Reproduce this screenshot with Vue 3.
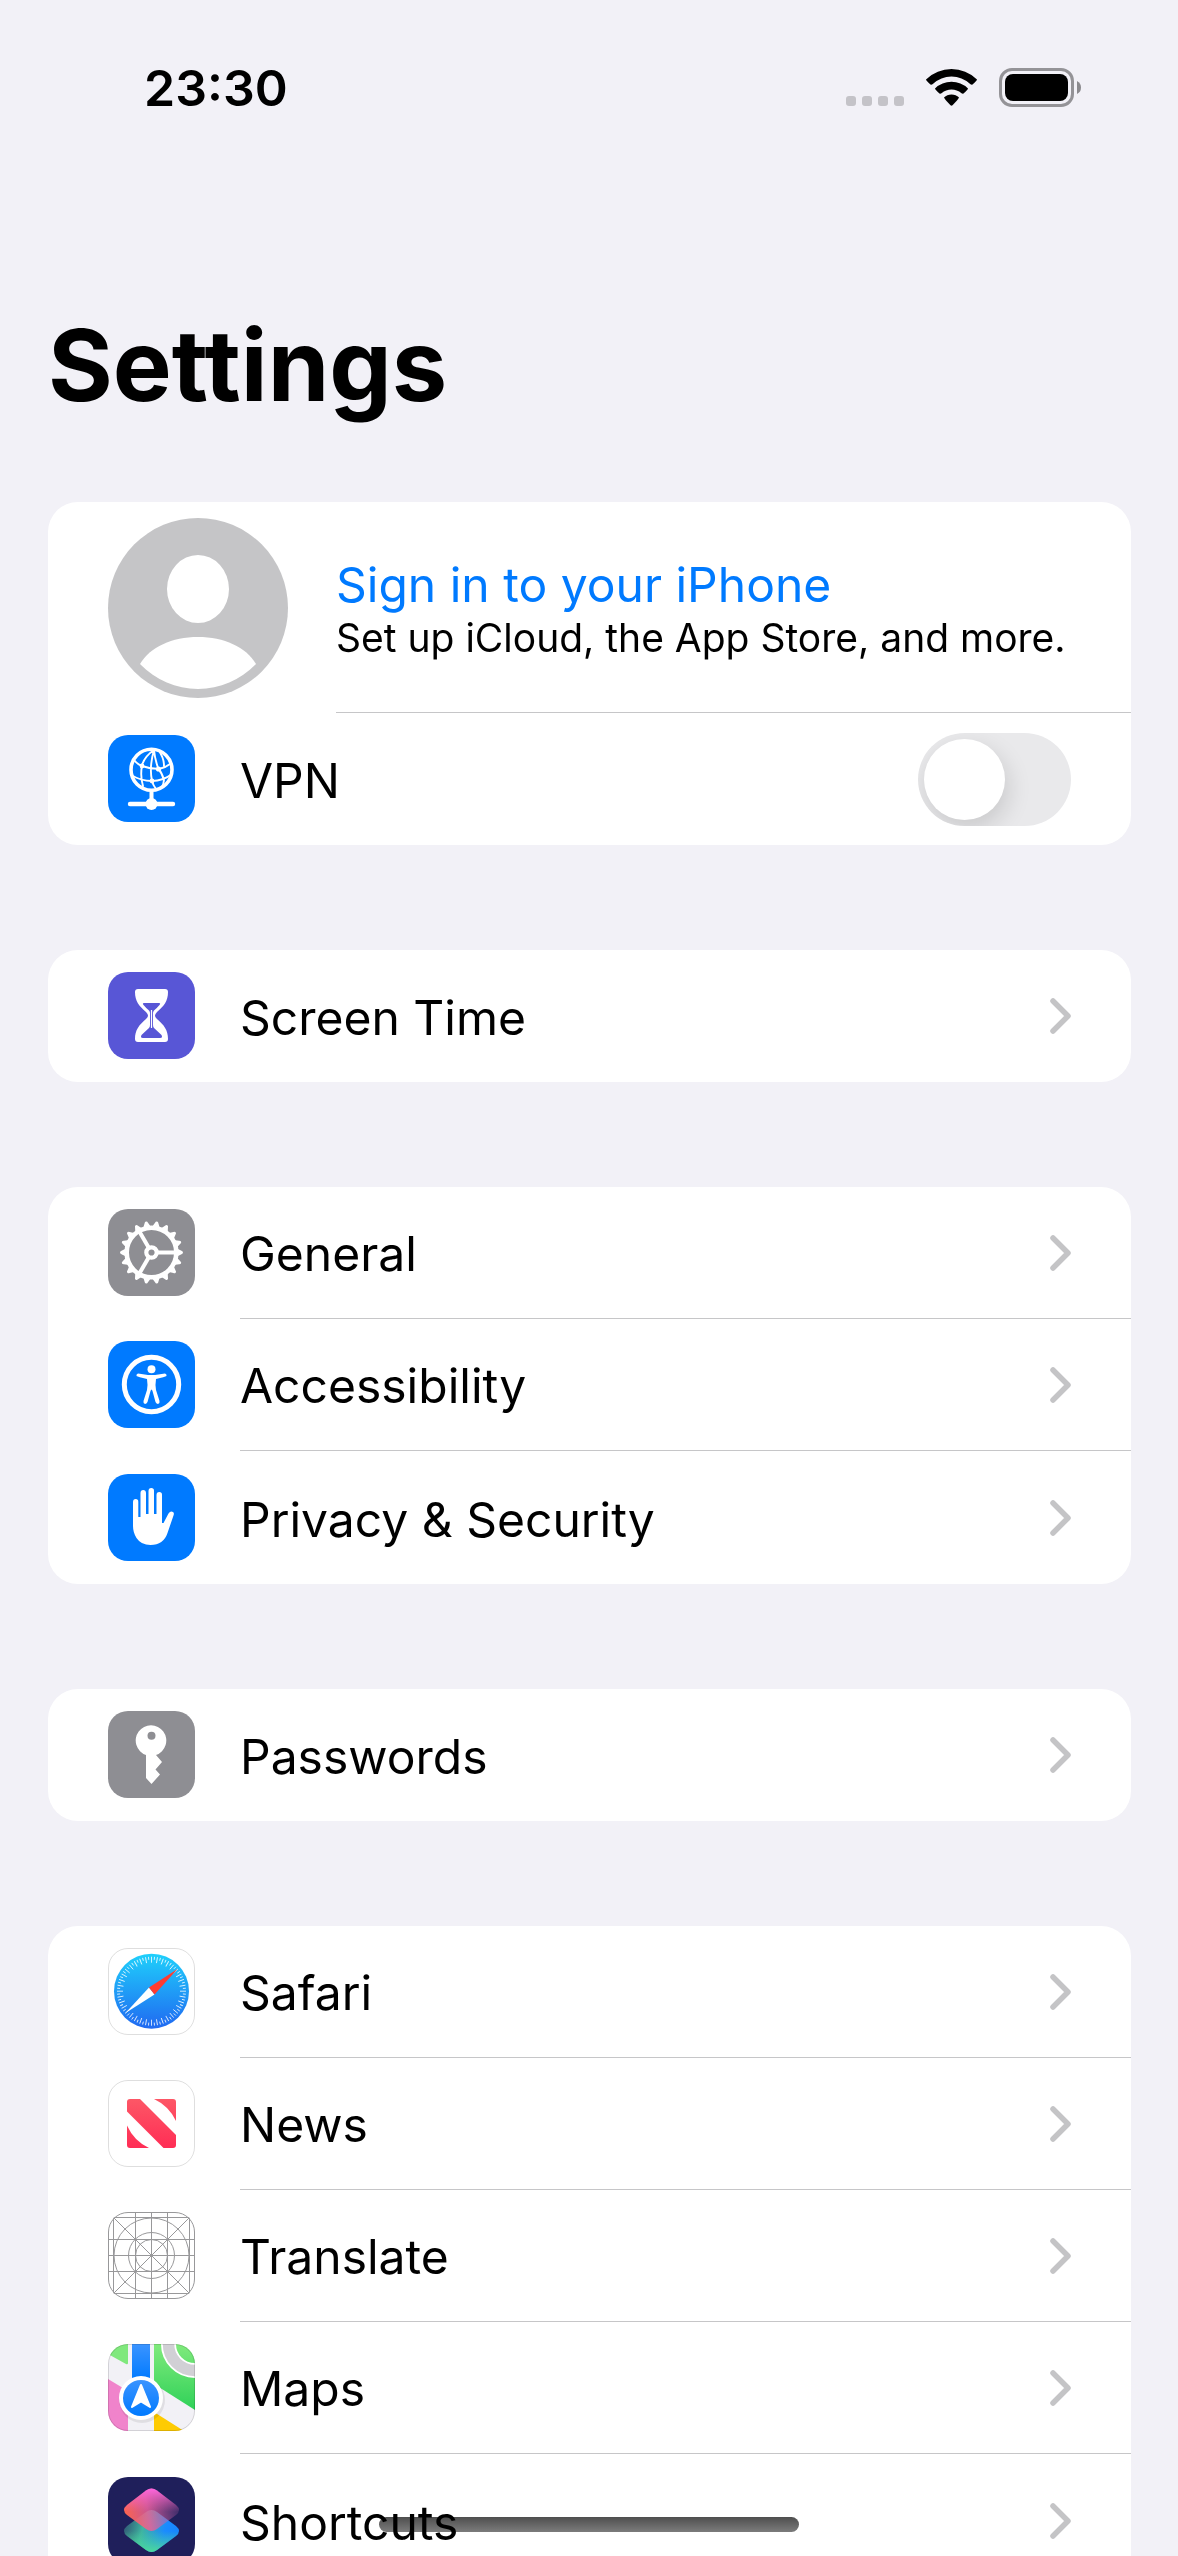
<script setup>
import { ref } from 'vue'

const vpnOn = ref(false)

const groups = [
  [{ id: 'screen-time', label: 'Screen Time', tint: '#5856d6' }],
  [
    { id: 'general', label: 'General', tint: '#8e8e93' },
    { id: 'accessibility', label: 'Accessibility', tint: '#007aff' },
    { id: 'privacy', label: 'Privacy & Security', tint: '#007aff' },
  ],
  [{ id: 'passwords', label: 'Passwords', tint: '#8e8e93' }],
  [
    { id: 'safari', label: 'Safari', tint: '#ffffff' },
    { id: 'news', label: 'News', tint: '#ffffff' },
    { id: 'translate', label: 'Translate', tint: '#ffffff' },
    { id: 'maps', label: 'Maps', tint: '#f2f1f6' },
    { id: 'shortcuts', label: 'Shortcuts', tint: '#1f1f5b' },
  ],
]

const gearTeeth = Array.from({ length: 18 }, (_, i) => i * 20)
const compassTicks = Array.from({ length: 72 }, (_, i) => ({ angle: i * 5, long: i % 2 === 0 }))
const gridLines = [5, 27, 43, 59, 81]
</script>

<template>
  <div class="screen">
    <header class="status">
      <time class="clock">23:30</time>
      <div class="indicators">
        <svg class="cellular" viewBox="0 0 58 10" aria-hidden="true">
          <rect v-for="n in 4" :key="n" :x="(n - 1) * 16" width="10" height="10" rx="3" fill="#c4c3c8" />
        </svg>
        <svg class="wifi" viewBox="0 0 51 37" aria-hidden="true">
          <path d="M0 10.500Q11 0 25.500 0T51 10.500Q51 11.500 46.500 15.500Q45.500 16 44.500 15.200Q36 7.500 25.500 7.500T6.500 15.200Q5.500 16 4.500 15.500Q0 11.500 0 10.500Z" />
          <path d="M9 19.500Q16 12.800 25.500 12.800T42 19.500Q42 20.500 37.500 24.500Q36.500 25 35.500 24.200Q31 20.500 25.500 20.500T15.500 24.200Q14.500 25 13.500 24.500Q9 20.500 9 19.500Z" />
          <path d="M18 28.500Q21 25.500 25.500 25.500T33 28.500Q33 29.500 26.500 36.300Q25.500 37 24.500 36.300Q18 29.500 18 28.500Z" />
        </svg>
        <svg class="battery" viewBox="0 0 83 39" aria-hidden="true">
          <rect x="1.500" y="1.500" width="72" height="36" rx="11.500" fill="none" stroke="#949397" stroke-width="3" />
          <rect x="6" y="6" width="63" height="27" rx="8" />
          <path d="M78 13Q82 15 82 19.500T78 26Z" fill="#8b8a8e" />
        </svg>
      </div>
    </header>

    <main class="content">
      <h1 class="title">Settings</h1>

      <section class="card">
        <a class="profile" href="#sign-in">
          <svg class="avatar" viewBox="0 0 180 180" aria-hidden="true">
            <circle cx="90" cy="90" r="90" fill="#c5c5c7" />
            <ellipse cx="90" cy="71" rx="31" ry="34" fill="#fff" />
            <path d="M32 146C42 129 64 119 90 119S138 129 148 146C132 162 112 171 90 171S48 162 32 146Z" fill="#fff" />
          </svg>
          <span class="profile-text">
            <span class="profile-title">Sign in to your iPhone</span>
            <span class="profile-sub">Set up iCloud, the App Store, and more.</span>
          </span>
        </a>
        <div class="vpn">
          <svg class="icon" viewBox="0 0 87 87" aria-hidden="true">
            <rect width="87" height="87" rx="20" fill="#007aff" />
            <g fill="none" stroke="#fff" stroke-linecap="round">
              <circle cx="43.500" cy="34.700" r="20.500" stroke-width="3.600" />
              <path stroke-width="1.900" d="M46 15Q37 21 34 30Q32 42 35 51M46 15Q41 32 44 46Q45 50 48 54M46 15Q47 25 50.500 34Q54 38 56 45Q56 49 53 53M51 16Q56 23 56 31M26 25Q29 29 34 31Q42 34 51 34Q57 33 62 29M23 40Q33 46 44 46Q55 46 64 39" />
              <path stroke-width="4" d="M43.500 57V67" />
              <path stroke-width="4.400" d="M22 69H65" />
            </g>
            <circle cx="34" cy="31" r="2.400" fill="#fff" />
            <circle cx="50.500" cy="34" r="2.600" fill="#fff" />
            <circle cx="44" cy="46" r="2.400" fill="#fff" />
            <circle cx="43.500" cy="69" r="6" fill="#fff" />
          </svg>
          <label class="vpn-label" for="vpn-switch">VPN</label>
          <input id="vpn-switch" v-model="vpnOn" class="switch" type="checkbox" role="switch" />
        </div>
      </section>

      <nav v-for="(group, g) in groups" :key="g" class="card">
        <a v-for="item in group" :key="item.id" class="row" :href="'#' + item.id">
          <svg class="icon" viewBox="0 0 87 87" aria-hidden="true">
            <defs>
              <clipPath :id="'tile-' + item.id"><rect width="87" height="87" rx="20" /></clipPath>
            </defs>
            <rect width="87" height="87" rx="20" :fill="item.tint" />

            <template v-if="item.id === 'screen-time'">
              <path fill="#fff" d="M30 17H57Q60 17 60 20C60 29 56 34 49 40Q47 42 47 43.500T49 47C56 53 60 58 60 67Q60 70 57 70H30Q27 70 27 67C27 58 31 53 38 47Q40 45 40 43.500T38 40C31 34 27 29 27 20Q27 17 30 17Z" />
              <path fill="#5856d6" d="M36 31H51Q53 31 51.500 33Q49 36 46 38.500Q45 39.500 45 41V53Q45 55 46 56L53.500 63Q55 66 52 66H35Q32 66 33.500 63L41 56Q42 55 42 53V41Q42 39.500 41 38.500Q38 36 35.500 33Q34 31 36 31Z" />
              <path stroke="#fff" stroke-width="1.200" d="M43.500 38V56" />
            </template>

            <g v-else-if="item.id === 'general'" transform="translate(43.500 43.500)">
              <path v-for="a in gearTeeth" :key="a" :transform="`rotate(${a})`" fill="#fff" d="M25-4.200L30-1.700Q31.500-1.300 31.500 0T30 1.700L25 4.200Z" />
              <circle r="24.800" fill="none" stroke="#fff" stroke-width="4.600" />
              <path v-for="a in [0, 120, 240]" :key="'s' + a" :transform="`rotate(${a})`" stroke="#fff" stroke-width="4" d="M6 0H24" />
              <circle r="5.200" fill="#8e8e93" stroke="#fff" stroke-width="4.200" />
            </g>

            <template v-else-if="item.id === 'accessibility'">
              <circle cx="43.500" cy="43.500" r="27.200" fill="none" stroke="#fff" stroke-width="5" />
              <circle cx="43.500" cy="28.300" r="4" fill="#fff" />
              <path fill="#fff" d="M30 32.500L40 34H47L57 32.500Q59 33 58.500 35Q57 36 48 38Q47 44 48 49L51.500 60Q52 62.500 50 63Q48.500 63 47.500 61L44.500 50Q43.500 47 42.500 50L39.500 61Q38.500 63 37 63Q35 62.500 35.500 60L39 49Q40 44 39 38Q30 36 28.500 35Q28 33 30 32.500Z" />
            </template>

            <path
              v-else-if="item.id === 'privacy'"
              fill="#fff"
              d="M25 28Q25 25 27.700 25T30.300 28V43H32.500V19Q32.500 16 35.200 16T38 19V40H40.500V17Q40.500 14 43.300 14T46 17V40H48.500V21Q48.500 18 51.300 18T54 21V49H55.500L60.500 39.500Q62.500 36.500 65 38Q66.500 39 65.500 41.500L59.500 59Q55.500 71 42.500 71Q33 71 28.500 64Q25 58.500 25 52Z"
            />

            <template v-else-if="item.id === 'passwords'">
              <path fill="#fff" d="M38 44A15.300 15.300 0 1 1 48 44L54 51L47.500 58.500L52 63.500L43.500 73L38 67Z" />
              <circle cx="43.500" cy="24.700" r="4" fill="#8e8e93" />
            </template>

            <template v-else-if="item.id === 'safari'">
              <linearGradient id="safari-sky" x1="0" y1="0" x2="0" y2="1">
                <stop offset="0" stop-color="#1fd0fb" />
                <stop offset="1" stop-color="#2069f1" />
              </linearGradient>
              <circle cx="43.500" cy="43.200" r="37.500" fill="url(#safari-sky)" />
              <g transform="translate(43.500 43.200)" stroke="#fff" stroke-width="0.900" opacity="0.850">
                <path v-for="t in compassTicks" :key="t.angle" :transform="`rotate(${t.angle})`" :d="t.long ? 'M28.500 0H34.500' : 'M31.500 0H34.500'" />
              </g>
              <path d="M17.500 65L41 39.500L46.500 46.500Z" fill="#fff" />
              <path d="M69.500 21L41 39.500L46.500 46.500Z" fill="#ff3b30" />
            </template>

            <template v-else-if="item.id === 'news'">
              <linearGradient id="news-red" gradientUnits="userSpaceOnUse" x1="0" y1="19" x2="0" y2="68">
                <stop offset="0" stop-color="#fd5766" />
                <stop offset="1" stop-color="#ff2d55" />
              </linearGradient>
              <path fill="url(#news-red)" d="M22 19H32L68 55V65Q68 68 65 68H55.500L19 31.500V22Q19 19 22 19ZM46 19H65Q68 19 68 22V41Q61 26 46 19ZM19 45.500Q26 61 41 68H22Q19 68 19 65Z" />
            </template>

            <g v-else-if="item.id === 'translate'" fill="none" stroke="#98989a" stroke-width="1" clip-path="url(#tile-translate)">
              <path v-for="p in gridLines" :key="p" :d="`M${p + 0.5} 0V87M0 ${p + 0.5}H87`" />
              <path d="M5 5L82 82M82 5L5 82" />
              <circle cx="43.500" cy="43.500" r="37.500" />
              <circle cx="43.500" cy="43.500" r="23" />
              <circle cx="43.500" cy="43.500" r="16" />
            </g>

            <g v-else-if="item.id === 'maps'" clip-path="url(#tile-maps)">
              <linearGradient id="maps-green" x1="0" y1="0" x2="0" y2="1">
                <stop offset="0" stop-color="#80ea7c" />
                <stop offset="1" stop-color="#2fd158" />
              </linearGradient>
              <linearGradient id="maps-blue" x1="0" y1="0" x2="0" y2="1">
                <stop offset="0" stop-color="#3b94ff" />
                <stop offset="1" stop-color="#007aff" />
              </linearGradient>
              <path d="M0 0H20V19Q20 21 18 20L0 10Z" fill="#80e87d" />
              <path d="M46 0H87V66L46 40Z" fill="url(#maps-green)" />
              <circle cx="87" cy="0" r="26.500" fill="none" stroke="#fff" stroke-width="15" />
              <circle cx="87" cy="0" r="26.500" fill="none" stroke="#d1d0d5" stroke-width="11.500" />
              <path d="M24 0H42V36H24Z" fill="url(#maps-blue)" />
              <path d="M0 35L20 47V87H0Z" fill="#f083cb" />
              <path d="M46 68L76 87H46Z" fill="#fecb02" />
              <circle cx="34" cy="56" r="23" fill="#000" opacity="0.080" />
              <circle cx="33" cy="54" r="22" fill="#fff" />
              <circle cx="33" cy="54" r="18" fill="url(#maps-blue)" />
              <path d="M33 41L42 63L33 57.500L24 63Z" fill="#fff" stroke="#fff" stroke-width="2" stroke-linejoin="round" />
            </g>

            <template v-else-if="item.id === 'shortcuts'">
              <linearGradient id="sc-low" x1="0" y1="0.300" x2="1" y2="0.500">
                <stop offset="0" stop-color="#3c7f86" stop-opacity="0.600" />
                <stop offset="0.350" stop-color="#3fb4a0" />
                <stop offset="0.750" stop-color="#1a8bff" />
                <stop offset="1" stop-color="#1684ff" />
              </linearGradient>
              <linearGradient id="sc-green" x1="0" y1="0" x2="0" y2="1">
                <stop offset="0.500" stop-color="#4cd99b" stop-opacity="0" />
                <stop offset="1" stop-color="#4cd99b" />
              </linearGradient>
              <linearGradient id="sc-high" x1="0" y1="0.700" x2="1" y2="0.550">
                <stop offset="0" stop-color="#ff6548" />
                <stop offset="0.450" stop-color="#e8609a" stop-opacity="0.850" />
                <stop offset="1" stop-color="#c060a8" stop-opacity="0.200" />
              </linearGradient>
              <linearGradient id="sc-pink" x1="0" y1="0" x2="0" y2="1">
                <stop offset="0" stop-color="#ff66e0" />
                <stop offset="0.550" stop-color="#ff66b0" stop-opacity="0" />
              </linearGradient>
              <path v-for="f in ['sc-low', 'sc-green']" :key="f" :fill="`url(#${f})`" d="M38 35Q43.500 31 49 35L68 49Q74 54 68 59L49 73Q43.500 77 38 73L19 59Q13 54 19 49Z" />
              <path v-for="f in ['sc-high', 'sc-pink']" :key="f" :fill="`url(#${f})`" d="M38 13.500Q43.500 9.500 49 13.500L68 28Q74 33 68 38L49 52Q43.500 56 38 52L19 38Q13 33 19 28Z" />
            </template>

            <rect
              v-if="['safari', 'news', 'translate', 'maps'].includes(item.id)"
              x="0.500" y="0.500" width="86" height="86" rx="19.500" fill="none"
              :stroke="item.id === 'translate' ? '#98989a' : '#000'"
              :stroke-opacity="item.id === 'translate' ? 1 : 0.130"
            />
          </svg>
          <span class="row-body">
            <span class="row-label">{{ item.label }}</span>
            <svg class="chevron" viewBox="0 0 21 36" aria-hidden="true">
              <path d="M3 3L18 18L3 33" fill="none" stroke="#c4c4c6" stroke-width="5.500" stroke-linecap="round" stroke-linejoin="round" />
            </svg>
          </span>
        </a>
      </nav>
    </main>

    <div class="home-indicator"></div>
  </div>
</template>

<style>
body {
  margin: 0;
  background: #f2f1f7;
}
</style>

<style scoped>
.screen {
  position: relative;
  display: flex;
  flex-direction: column;
  height: 100vh;
  overflow: hidden;
  box-sizing: border-box;
  background: #f2f1f7;
  color: #000;
  font-family: Inter, "Liberation Sans", sans-serif;
  font-size: 48px;
}
.status {
  flex: none;
  display: flex;
  align-items: center;
  justify-content: space-between;
  height: 175px;
  padding: 0 96px 0 144px;
}
.clock {
  font-size: 50px;
  font-weight: 600;
}
.indicators {
  display: flex;
  align-items: flex-end;
  gap: 22px;
}
.cellular {
  width: 58px;
  height: 10px;
}
.wifi {
  width: 51px;
  height: 37px;
}
.cellular,
.wifi {
  margin-bottom: 1px;
}
.battery {
  width: 83px;
  height: 39px;
}
.content {
  flex: 1;
  min-height: 0;
  overflow-y: auto;
  scrollbar-width: none;
  padding: 129px 47px 0 48px;
}
.title {
  margin: 0 0 76px;
  font-size: 99px;
  line-height: 122px;
  font-weight: 700;
}
.card {
  margin-bottom: 105px;
  border-radius: 30px;
  background: #fff;
  overflow: hidden;
}
.profile,
.vpn,
.row {
  display: flex;
  box-sizing: border-box;
  align-items: stretch;
  padding-left: 60px;
  color: inherit;
  text-decoration: none;
}
.profile {
  gap: 48px;
}
.avatar {
  flex: none;
  align-self: center;
  width: 180px;
  height: 180px;
}
.profile-text {
  flex: 1;
  display: flex;
  box-sizing: border-box;
  flex-direction: column;
  justify-content: center;
  height: 211px;
  padding-top: 2px;
  border-bottom: 1px solid #c6c6c8;
}
.profile-title {
  color: #007aff;
  line-height: 60px;
}
.profile-sub {
  font-size: 39px;
  line-height: 46px;
}
.vpn,
.row {
  gap: 45px;
}
.vpn {
  align-items: center;
  height: 132px;
  padding-right: 60px;
}
.vpn-label {
  flex: 1;
  padding-top: 2px;
}
.icon {
  flex: none;
  align-self: center;
  width: 87px;
  height: 87px;
  margin-bottom: 1px;
}
.row {
  height: 132px;
}
.row:last-child:not(:first-child) {
  height: 133px;
  padding-top: 1px;
}
.row-body {
  flex: 1;
  display: flex;
  align-items: center;
  justify-content: space-between;
  padding-right: 60px;
  border-bottom: 1px solid #c6c6c8;
}
.row-label {
  padding-top: 2px;
}
.row:last-child .row-body {
  border-bottom: 0;
}
.chevron {
  width: 21px;
  height: 36px;
}
.switch {
  appearance: none;
  display: flex;
  box-sizing: border-box;
  width: 153px;
  height: 93px;
  margin: 0;
  padding: 6px;
  border-radius: 47px;
  background: #e9e9eb;
  overflow: hidden;
}
.switch::before {
  content: "";
  width: 81px;
  height: 81px;
  border-radius: 50%;
  background: #fff;
  box-shadow: 3px 9px 24px rgba(0, 0, 0, 0.14);
}
.switch:checked {
  justify-content: flex-end;
  background: #34c759;
}
.home-indicator {
  position: absolute;
  bottom: 24px;
  left: 50%;
  width: 420px;
  height: 15px;
  margin-left: -210px;
  border-radius: 8px;
  background: linear-gradient(#4e4e4e, #7c7c7c);
  mix-blend-mode: multiply;
}
</style>
